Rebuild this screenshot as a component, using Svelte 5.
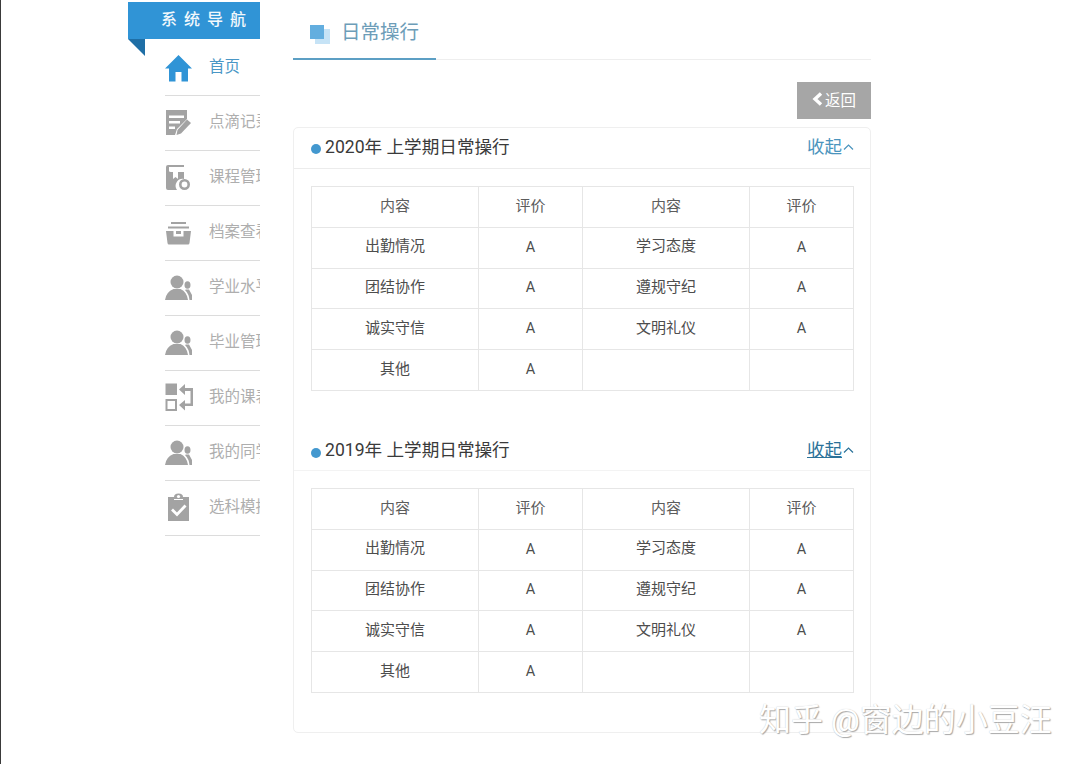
<script>
  const blue = '#3094d6';
  const nav = [
    { label: '首页', icon: 'home', active: true },
    { label: '点滴记录', icon: 'note' },
    { label: '课程管理', icon: 'course' },
    { label: '档案查看', icon: 'box' },
    { label: '学业水平', icon: 'people' },
    { label: '毕业管理', icon: 'people' },
    { label: '我的课表', icon: 'swap' },
    { label: '我的同学', icon: 'people' },
    { label: '选科模拟', icon: 'check' }
  ];
  const rows = [
    ['出勤情况', 'A', '学习态度', 'A'],
    ['团结协作', 'A', '遵规守纪', 'A'],
    ['诚实守信', 'A', '文明礼仪', 'A'],
    ['其他', 'A', '', '']
  ];
  const sections = [
    { year: '2020年 上学期日常操行', hover: false },
    { year: '2019年 上学期日常操行', hover: true }
  ];
</script>

<div class="page">
  <aside class="side">
    <div class="ribbon">系统导航</div>
    <ul class="nav">
      {#each nav as item}
        <li class="item" class:active={item.active}>
          <span class="ico">
            {#if item.icon === 'home'}
              <svg width="27" height="28" viewBox="0 0 27 28"><path fill={blue} d="M13.5 1 L27 14.5 L23 14.5 L23 27.5 L16.5 27.5 L16.5 18 L10.5 18 L10.5 27.5 L4 27.5 L4 14.5 L0 14.5 Z"/></svg>
            {:else if item.icon === 'note'}
              <svg width="27" height="27" viewBox="0 0 27 27"><path fill="#a3a3a3" d="M1 1 H22 V10 L12 20 L10 26 H1 Z"/><path fill="#fff" d="M4 6.5 H19 V9 H4 Z M4 12 H15 V14.500 H4 Z M4 17.500 H10 V20 H4 Z"/><path fill="#a3a3a3" d="M22 10.500 L26 14 L16 24.500 L11.500 26 L12.500 21 Z"/></svg>
            {:else if item.icon === 'course'}
              <svg width="27" height="27" viewBox="0 0 27 27"><path fill="#a3a3a3" d="M1 3 Q1 1 3 1 H19 V3 H4 V7 Q4 8 6 8 H8 V15 L10.500 13 L13 15 V8 H19 V15 A7 7 0 0 0 12 26 H3 Q1 26 1 24 Z"/><circle cx="19.500" cy="20.500" r="4.200" fill="none" stroke="#a3a3a3" stroke-width="2.600"/></svg>
            {:else if item.icon === 'box'}
              <svg width="27" height="24" viewBox="0 0 27 24"><path fill="#a3a3a3" d="M6 1 H21 V3 H6 Z M3 5.500 H24 V7.500 H3 Z M1 10 H26 L24.500 22 Q24.300 23.500 23 23.500 H4 Q2.700 23.500 2.500 22 Z"/><path fill="#fff" d="M8.500 10 H11 V13 H16 V10 H18.500 V15.500 H8.500 Z"/></svg>
            {:else if item.icon === 'people'}
              <svg width="28" height="26" viewBox="0 0 28 26"><circle cx="12" cy="7" r="6.500" fill="#a3a3a3"/><path fill="#a3a3a3" d="M0 25 Q1 17 8.500 14 H15.500 Q22 17 23 25 Z"/><ellipse cx="22.500" cy="10" rx="3" ry="3.800" fill="#a3a3a3"/><path fill="#a3a3a3" d="M21 14.500 L24 14.500 L27 20 V25 H24.500 Q24 19 20 15 Z"/></svg>
            {:else if item.icon === 'swap'}
              <svg width="29" height="29" viewBox="0 0 29 29"><rect x="0.500" y="0.500" width="11.500" height="11.500" fill="#a3a3a3"/><rect x="1.500" y="17" width="9.500" height="10" fill="none" stroke="#a3a3a3" stroke-width="2"/><path fill="#a3a3a3" d="M14 6.500 L20 1 V5 H28 V23 H20 V27.500 L14 22 L20 17 V20.500 H25.500 V8 H20 V12 Z"/></svg>
            {:else}
              <svg width="27" height="29" viewBox="0 0 27 29"><path fill="#a3a3a3" d="M3 4 H9 V7 H18 V4 H24 V28 H3 Z"/><path fill="#a3a3a3" d="M9 4 Q9 .5 13.500 .5 Q18 .5 18 4 V6 H9 Z"/><circle cx="13.500" cy="3.500" r="1.600" fill="#fff"/><path fill="none" stroke="#fff" stroke-width="2.800" d="M7 16.500 L12 21.500 L20.500 12.500"/></svg>
            {/if}
          </span>
          <span class="label">{item.label}</span>
        </li>
      {/each}
    </ul>
  </aside>

  <main class="main">
    <div class="tabs">
      <div class="tab">
        <span class="tab-ico"><i class="sq back"></i><i class="sq front"></i></span>
        <span class="tab-text">日常操行</span>
      </div>
    </div>

    <div class="tools">
      <button class="back-btn">
        <svg width="11" height="14" viewBox="0 0 11 14"><path fill="none" stroke="#fff" stroke-width="3.400" d="M9 1.500 L3 7 L9 12.500"/></svg>返回
      </button>
    </div>

    <div class="card">
      {#each sections as s}
        <section class="sec">
          <header class="sec-head">
            <span class="dot"></span>
            <h2 class="sec-title">{s.year}</h2>
            <span class="toggle">
              <span class="toggle-text" class:hover={s.hover}>收起</span>
              <svg width="11" height="6" viewBox="0 0 11 6"><path fill="none" stroke={s.hover ? '#2b7299' : '#4a94bd'} stroke-width="1.200" d="M1 5.500 L5.500 1 L10 5.500"/></svg>
            </span>
          </header>
          <table class="grid">
            <colgroup><col class="c1" /><col class="c2" /><col class="c1" /><col class="c2" /></colgroup>
            <thead>
              <tr><th>内容</th><th>评价</th><th>内容</th><th>评价</th></tr>
            </thead>
            <tbody>
              {#each rows as r}
                <tr>{#each r as c, i}<td class:grade={i % 2 === 1}>{c}</td>{/each}</tr>
              {/each}
            </tbody>
          </table>
        </section>
      {/each}
    </div>
  </main>

  <div class="mark">知乎 @窗边的小豆汪</div>
</div>

<style>
  :global(body) {
    margin: 0;
    background: #fff;
    border-left: 1px solid #3a3a3a;
    font-family: Roboto, "Noto Sans CJK SC", sans-serif;
  }
  .page {
    display: flex;
    align-items: flex-start;
    padding: 2px 0 0 127px;
    height: 762px;
    box-sizing: content-box;
    overflow: hidden;
    position: relative;
  }
  .side {
    width: 132px;
    flex: none;
    margin-right: 33px;
  }
  .ribbon {
    position: relative;
    height: 37px;
    line-height: 36px;
    background: #3094d6;
    color: #f2f8fc;
    font-size: 16px;
    font-weight: 500;
    letter-spacing: 7px;
    padding-left: 33px;
    box-sizing: border-box;
    white-space: nowrap;
  }
  .ribbon::after {
    content: "";
    position: absolute;
    left: 0;
    top: 37px;
    width: 17px;
    height: 17px;
    background: #1f6fa6;
    clip-path: polygon(0 0, 100% 0, 100% 100%);
  }
  .nav {
    list-style: none;
    margin: 2px 0 0 37px;
    padding: 0;
  }
  .item {
    display: flex;
    align-items: center;
    height: 55px;
    box-sizing: border-box;
    border-bottom: 1px solid #dcdcdc;
    overflow: hidden;
    color: #aeaeae;
    font-size: 15.500px;
  }
  .item.active {
    color: #4a97c6;
  }
  .ico {
    width: 44px;
    flex: none;
    display: flex;
    align-items: center;
    padding-bottom: 1px;
  }
  .ico svg {
    display: block;
  }
  .label {
    width: 51px;
    overflow: hidden;
    white-space: nowrap;
    padding-bottom: 6px;
  }
  .main {
    width: 578px;
    flex: none;
    margin-top: -2px;
  }
  .tabs {
    height: 60px;
    box-sizing: border-box;
    border-bottom: 1px solid #eeeeee;
    display: flex;
  }
  .tab {
    width: 143px;
    height: 60px;
    box-sizing: border-box;
    border-bottom: 2px solid #5c9fc4;
    display: flex;
    align-items: center;
    padding: 12px 0 2px 17px;
  }
  .tab-ico {
    position: relative;
    width: 31px;
    height: 20px;
    flex: none;
    top: 1px;
  }
  .sq {
    position: absolute;
    display: block;
  }
  .sq.back {
    left: 5px;
    top: 4px;
    width: 15px;
    height: 15px;
    background: #c6e3f6;
  }
  .sq.front {
    left: 0;
    top: 0;
    width: 14px;
    height: 14px;
    background: #63aedf;
  }
  .tab-text {
    font-size: 19.500px;
    color: #6d9db8;
    line-height: 1;
    position: relative;
    top: -1px;
  }
  .tools {
    display: flex;
    justify-content: flex-end;
    margin-top: 22px;
    margin-bottom: 8px;
  }
  .back-btn {
    width: 74px;
    height: 37px;
    border: 0;
    padding: 0 0 3px;
    margin: 0;
    background: #a6a6a6;
    color: #fff;
    font: inherit;
    font-size: 15.500px;
    display: flex;
    align-items: center;
    justify-content: center;
    gap: 2px;
  }
  .card {
    border: 1px solid #efefef;
    border-radius: 5px;
    height: 606px;
    box-sizing: border-box;
  }
  .sec + .sec {
    margin-top: 39px;
  }
  .sec-head {
    height: 41px;
    box-sizing: border-box;
    border-bottom: 1px solid #ececec;
    display: flex;
    align-items: center;
    padding: 0 16px 6px 17px;
    margin-bottom: 17px;
  }
  .sec + .sec .sec-head {
    border-bottom-color: #f3f3f3;
    padding-bottom: 2px;
  }
  .dot {
    width: 10px;
    height: 10px;
    border-radius: 50%;
    background: #4398cf;
    margin: 8px 4px 0 0;
    flex: none;
  }
  .sec-title {
    margin: 0;
    font-size: 17.600px;
    font-weight: 400;
    color: #3a3a3a;
    flex: 1;
    white-space: nowrap;
  }
  .toggle {
    display: flex;
    align-items: center;
    gap: 1px;
  }
  .toggle svg {
    margin-top: 3px;
  }
  .toggle-text {
    font-size: 17.500px;
    color: #4a94bd;
  }
  .toggle-text.hover {
    color: #2b7299;
    text-decoration: underline;
  }
  .grid {
    border-collapse: collapse;
    table-layout: fixed;
    width: 543px;
    margin-left: 17px;
  }
  .c1 { width: 167px; }
  .c2 { width: 104px; }
  th, td {
    height: 40.800px;
    padding: 0 0 6px;
    box-sizing: border-box;
    border: 1px solid #e6e6e6;
    text-align: center;
    font-size: 15px;
    font-weight: 400;
    color: #4d4d4d;
  }
  th {
    color: #5c5c5c;
    padding-bottom: 4px;
  }
  td.grade {
    padding-bottom: 1px;
    font-size: 14.500px;
  }
  .mark {
    position: absolute;
    left: 758px;
    top: 702px;
    font-size: 32px;
    line-height: 36px;
    color: #fff;
    white-space: nowrap;
    text-shadow: 1px 1px 1px #a8a8a8, 0 0 1px #c4c4c4;
  }
</style>
